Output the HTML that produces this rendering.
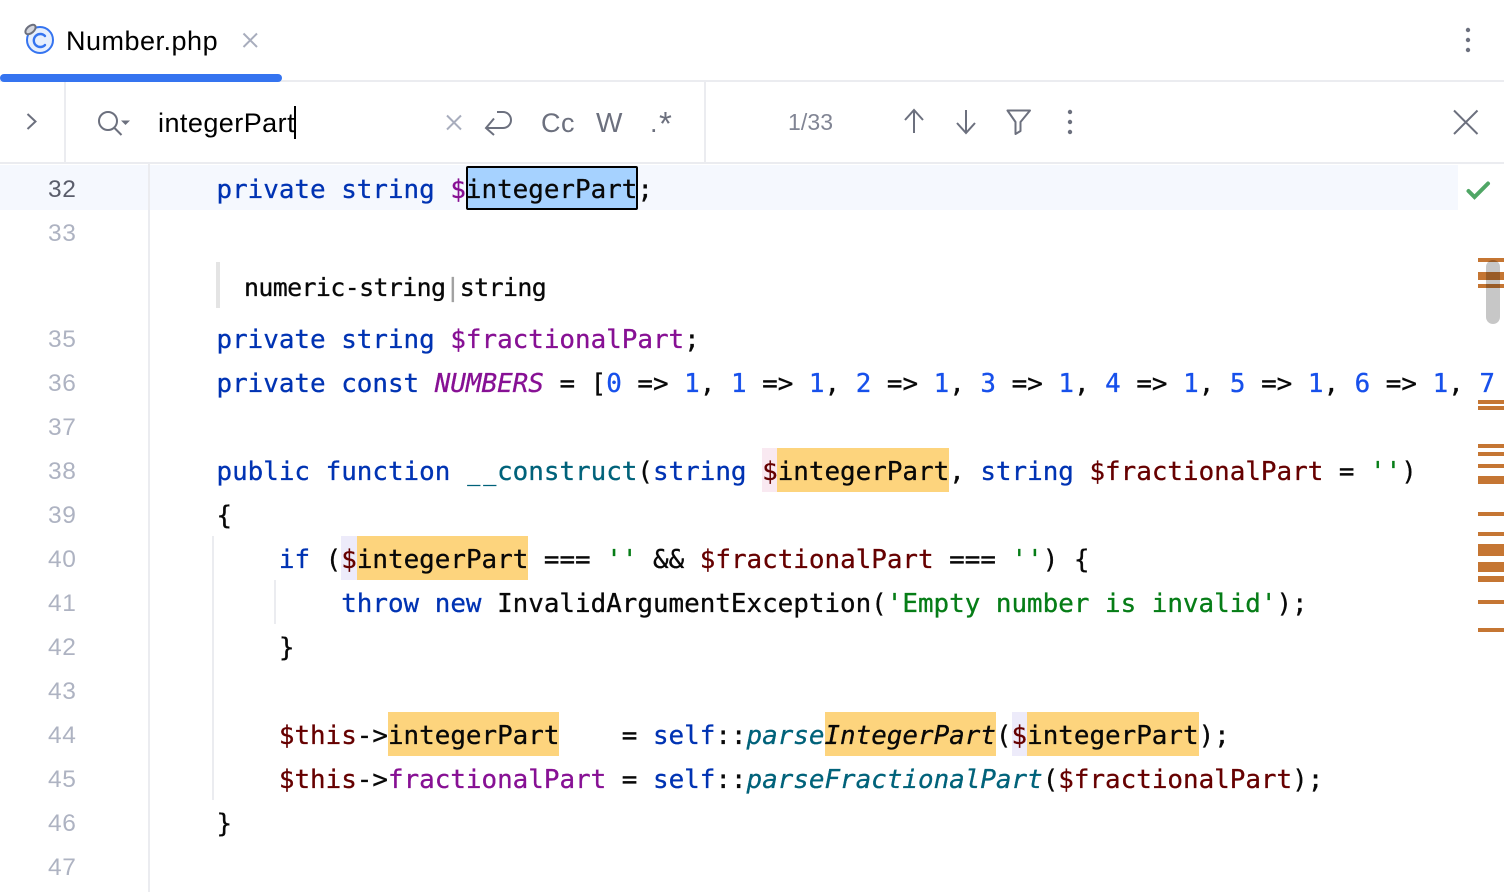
<!DOCTYPE html>
<html><head><meta charset="utf-8">
<style>
html,body{margin:0;padding:0;background:#fff}
#p{position:relative;width:1504px;height:892px;overflow:hidden;background:#fff;font-family:"Liberation Sans",sans-serif}
.a{position:absolute}
.l{position:absolute;left:216.500px;height:44px;line-height:44px;white-space:pre;font-family:"DejaVu Sans Mono","Liberation Mono",monospace;font-size:25.9px;color:#080808;letter-spacing:0;-webkit-text-stroke:.3px currentColor}
.n{position:absolute;left:48px;width:32px;text-align:left;height:44px;line-height:44px;font-family:"Liberation Sans",sans-serif;font-size:24.5px;color:#aeb3c2;letter-spacing:.6px}
.k{color:#0033b3}.f{color:#871094}.v{color:#660000}.d{color:#1750eb}.s{color:#067d17}.t{color:#00627a}.i{font-style:italic}
.u{display:inline-block;transform:scaleX(.84)}
.m{position:absolute;left:1478px;width:26px;background:#c57633}
svg{position:absolute;overflow:visible}
</style></head><body><div id="p">

<!-- chrome -->
<div class="a" style="left:0;top:80px;width:1504px;height:2px;background:#ebecf0"></div>
<div class="a" style="left:0;top:74px;width:282px;height:8px;background:#3574f0;border-radius:4px"></div>
<div class="a" style="left:0;top:162px;width:1504px;height:2px;background:#ebecf0"></div>
<div class="a" style="left:64px;top:82px;width:2px;height:80px;background:#ebecf0"></div>
<div class="a" style="left:704px;top:82px;width:2px;height:80px;background:#ebecf0"></div>

<!-- tab -->
<svg style="left:0;top:0" width="70" height="70" fill="none">
<circle cx="40" cy="40" r="13" fill="#e7effd" stroke="#3574f0" stroke-width="2"/>
<path d="M45 36A6.500 6.500 0 1 0 45 45" stroke="#3574f0" stroke-width="2.400" stroke-linecap="round"/>
<ellipse cx="30.500" cy="29.500" rx="6" ry="3.500" transform="rotate(-40 30.500 29.500)" fill="#d5d7de" stroke="#6c707e" stroke-width="2"/>
</svg>
<div class="a" style="left:66px;top:22px;height:38px;line-height:38px;font-size:27px;color:#000;letter-spacing:.5px">Number.php</div>
<svg style="left:242px;top:32px" width="16" height="16" fill="none" stroke="#a8adbd" stroke-width="2"><path d="M1.500 1.500L15 15M15 1.500L1.500 15"/></svg>
<svg style="left:1460px;top:24px" width="16" height="32" fill="#6c707e"><circle cx="8" cy="6" r="2.200"/><circle cx="8" cy="16" r="2.200"/><circle cx="8" cy="26" r="2.200"/></svg>

<!-- find bar -->
<svg style="left:0;top:82px" width="720" height="80" fill="none" stroke-width="2">
<path d="M27.500 32L35.500 39.500L27.500 47" stroke="#6c707e"/>
<circle cx="108" cy="39" r="9" stroke="#6c707e"/>
<path d="M114.500 46L121.500 53" stroke="#6c707e"/>
<path d="M121 38.500H130L125.500 43Z" fill="#6c707e" stroke="none"/>
<path d="M447 33.500L461 47.500M461 33.500L447 47.500" stroke="#a8adbd"/>
<path d="M497 30H503A8 8 0 0 1 503 46H486.500M494 36.500L486 46L494 53" stroke="#6c707e"/>
</svg>
<div class="a" style="left:158px;top:104px;height:38px;line-height:38px;font-size:27px;color:#000;letter-spacing:.45px">integerPart</div>
<div class="a" style="left:294px;top:106px;width:2px;height:33px;background:#000"></div>
<div class="a" style="left:541px;top:105px;height:36px;line-height:36px;font-size:27px;color:#6c707e;letter-spacing:.5px">Cc</div>
<div class="a" style="left:596px;top:105px;height:36px;line-height:36px;font-size:28px;color:#6c707e">W</div>
<div class="a" style="left:650px;top:105px;height:36px;line-height:36px;font-size:27px;color:#6c707e">.</div>
<div class="a" style="left:659px;top:106px;height:36px;line-height:36px;font-size:33px;color:#6c707e">*</div>
<div class="a" style="left:788px;top:105px;height:34px;line-height:34px;font-size:23px;color:#818594;letter-spacing:.1px">1/33</div>
<svg style="left:890px;top:96px" width="200" height="60" fill="none" stroke="#6c707e" stroke-width="2">
<path d="M24 37V14M15 24L24 14L33 24"/>
<path d="M76 14V37M67 27L76 37L85 27"/>
<path d="M117.500 14.500H140L130.500 26V35L125.500 38V26Z" stroke-linejoin="round"/>
<g fill="#6c707e" stroke="none"><circle cx="180" cy="16" r="2.200"/><circle cx="180" cy="26" r="2.200"/><circle cx="180" cy="36" r="2.200"/></g>
</svg>
<svg style="left:1450px;top:106px" width="32" height="32" fill="none" stroke="#6c707e" stroke-width="2"><path d="M4 4.500L27.500 28M27.500 4.500L4 28"/></svg>

<!-- editor backgrounds -->
<div class="a" style="left:0;top:165px;width:1458px;height:45px;background:#f5f8fe"></div>
<div class="a" style="left:148px;top:164px;width:2px;height:728px;background:#ebecf0"></div>
<div class="a" style="left:1458px;top:168px;width:44px;height:50px;background:#fff;border-radius:10px"></div>
<svg style="left:1466px;top:180px" width="28" height="22" fill="none" stroke="#4fa665" stroke-width="4" stroke-linecap="round"><path d="M2.500 11L8.500 17L22 3.500"/></svg>

<div class="a" style="left:212px;top:536px;width:2px;height:264px;background:#ebecf0"></div>
<div class="a" style="left:274px;top:580px;width:2px;height:44px;background:#ebecf0"></div>
<div class="a" style="left:216px;top:262px;width:4px;height:46px;background:#e4e4e4"></div>

<!-- highlights -->
<div class="a" style="left:466px;top:166px;width:172px;height:44px;box-sizing:border-box;background:#a6d2ff;border:2px solid #000;border-radius:2px"></div>
<div class="a" style="left:762px;top:448px;width:15px;height:44px;background:#f9e9f1"></div>
<div class="a" style="left:777px;top:448px;width:172px;height:44px;background:#fdd47d"></div>
<div class="a" style="left:341px;top:536px;width:16px;height:44px;background:#edebfa"></div>
<div class="a" style="left:357px;top:536px;width:171px;height:44px;background:#fdd47d"></div>
<div class="a" style="left:388px;top:712px;width:171px;height:44px;background:#fdd47d"></div>
<div class="a" style="left:825px;top:712px;width:171px;height:44px;background:#fdd47d"></div>
<div class="a" style="left:1012px;top:712px;width:15px;height:44px;background:#edebfa"></div>
<div class="a" style="left:1027px;top:712px;width:172px;height:44px;background:#fdd47d"></div>

<!-- line numbers -->
<div class="n" style="top:168px;color:#5a5d6b">32</div>
<div class="n" style="top:212px">33</div>
<div class="n" style="top:318px">35</div>
<div class="n" style="top:362px">36</div>
<div class="n" style="top:406px">37</div>
<div class="n" style="top:450px">38</div>
<div class="n" style="top:494px">39</div>
<div class="n" style="top:538px">40</div>
<div class="n" style="top:582px">41</div>
<div class="n" style="top:626px">42</div>
<div class="n" style="top:670px">43</div>
<div class="n" style="top:714px">44</div>
<div class="n" style="top:758px">45</div>
<div class="n" style="top:802px">46</div>
<div class="n" style="top:846px">47</div>

<!-- code -->
<div class="l" style="top:168px"><span class="k">private string </span><span class="f">$</span>integerPart;</div>
<div class="l" style="top:266px;left:244px;font-size:24.900px;letter-spacing:-.6px">numeric-string<span style="color:#a0a0a0">|</span>string</div>
<div class="l" style="top:318px"><span class="k">private string </span><span class="f">$fractionalPart</span>;</div>
<div class="l" style="top:362px"><span class="k">private const </span><span class="f i">NUMBERS</span> = [<span class="d">0</span> =&gt; <span class="d">1</span>, <span class="d">1</span> =&gt; <span class="d">1</span>, <span class="d">2</span> =&gt; <span class="d">1</span>, <span class="d">3</span> =&gt; <span class="d">1</span>, <span class="d">4</span> =&gt; <span class="d">1</span>, <span class="d">5</span> =&gt; <span class="d">1</span>, <span class="d">6</span> =&gt; <span class="d">1</span>, <span class="d">7</span></div>
<div class="l" style="top:450px"><span class="k">public function </span><span class="t"><span class="u">_</span><span class="u">_</span>construct</span>(<span class="k">string </span><span class="v">$</span>integerPart, <span class="k">string </span><span class="v">$fractionalPart</span> = <span class="s">''</span>)</div>
<div class="l" style="top:494px">{</div>
<div class="l" style="top:538px">    <span class="k">if</span> (<span class="v">$</span>integerPart === <span class="s">''</span> &amp;&amp; <span class="v">$fractionalPart</span> === <span class="s">''</span>) {</div>
<div class="l" style="top:582px">        <span class="k">throw new </span>InvalidArgumentException(<span class="s">'Empty number is invalid'</span>);</div>
<div class="l" style="top:626px">    }</div>
<div class="l" style="top:714px">    <span class="v">$this</span>-&gt;integerPart    = <span class="k">self</span>::<span class="t i">parse</span><span class="i">IntegerPart</span>(<span class="v">$</span>integerPart);</div>
<div class="l" style="top:758px">    <span class="v">$this</span>-&gt;<span class="f">fractionalPart</span> = <span class="k">self</span>::<span class="t i">parseFractionalPart</span>(<span class="v">$fractionalPart</span>);</div>
<div class="l" style="top:802px">}</div>

<!-- markers -->
<div class="m" style="top:258px;height:4px"></div>
<div class="m" style="top:272px;height:8px"></div>
<div class="m" style="top:284px;height:4px"></div>
<div class="m" style="top:400px;height:4px"></div>
<div class="m" style="top:406px;height:4px"></div>
<div class="m" style="top:444px;height:4px"></div>
<div class="m" style="top:452px;height:4px"></div>
<div class="m" style="top:464px;height:4px"></div>
<div class="m" style="top:476px;height:8px"></div>
<div class="m" style="top:512px;height:4px"></div>
<div class="m" style="top:532px;height:4px"></div>
<div class="m" style="top:544px;height:12px"></div>
<div class="m" style="top:562px;height:10px"></div>
<div class="m" style="top:576px;height:6px"></div>
<div class="m" style="top:600px;height:4px"></div>
<div class="m" style="top:628px;height:4px"></div>
<div class="a" style="left:1486px;top:260px;width:14px;height:64px;border-radius:7px;background:rgba(0,0,0,.22)"></div>

</div></body></html>
